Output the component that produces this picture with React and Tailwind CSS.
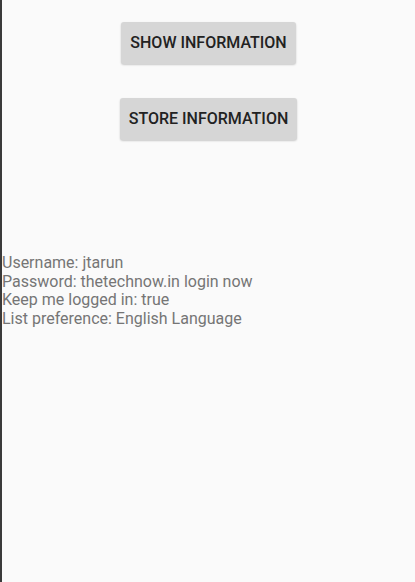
export default function App() {
  const prefs = [
    'Username: jtarun',
    'Password: thetechnow.in login now',
    'Keep me logged in: true',
    'List preference: English Language',
  ]

  return (
    <div className="h-[582px] w-[415px] bg-[#fafafa] border-l-2 border-[#3a3a3a] font-['Roboto',sans-serif] flex flex-col">
      {/* Buttons */}
      <div className="flex flex-col items-center pt-[22px] gap-[34px]">
        <button className="h-[42px] px-[9px] rounded-[3px] bg-[#d6d6d6] text-[#222] text-[16px] font-medium uppercase shadow-[0_1px_2px_rgba(0,0,0,0.2)]">
          Show Information
        </button>
        <button className="h-[42px] px-[9px] rounded-[3px] bg-[#d6d6d6] text-[#222] text-[16px] font-medium uppercase shadow-[0_1px_2px_rgba(0,0,0,0.2)]">
          Store Information
        </button>
      </div>

      {/* Saved preferences */}
      <div className="mt-[114px] text-[16px] leading-[18.7px] text-[#757575]">
        {prefs.map(line => (
          <p key={line}>{line}</p>
        ))}
      </div>
    </div>
  )
}
